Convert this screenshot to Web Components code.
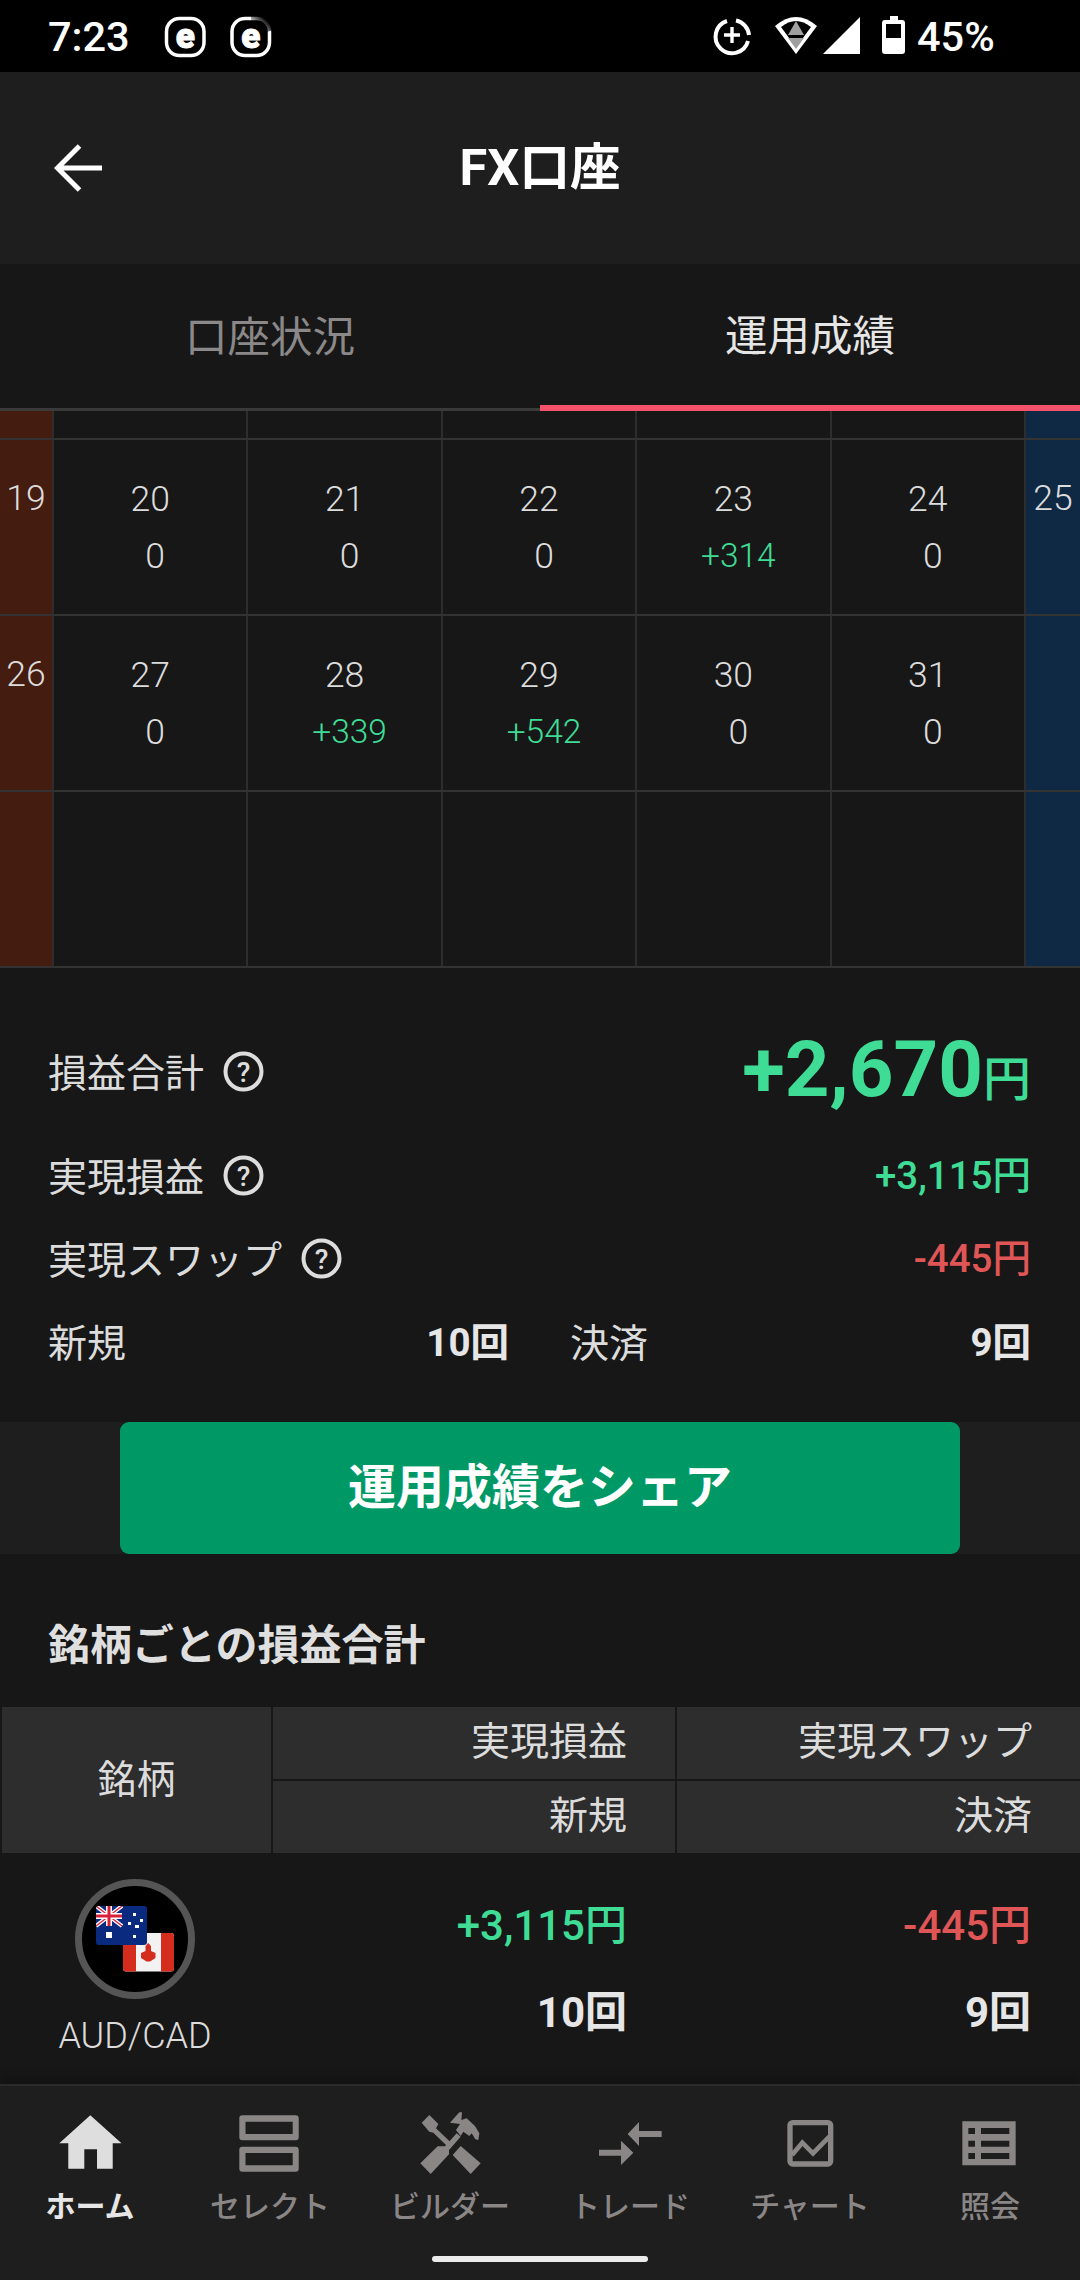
<!DOCTYPE html>
<html lang="ja"><head><meta charset="utf-8"><title>FX口座</title>
<style>
html,body{margin:0;padding:0;background:#171717;}
body{width:1080px;height:2280px;overflow:hidden;font-family:Roboto,"Noto Sans CJK JP",sans-serif;color:#e0e0e0;}
fx-app{display:block;}
</style></head>
<body>
<fx-app>
  <fx-status-bar></fx-status-bar>
  <fx-app-bar>FX口座</fx-app-bar>
  <fx-tabs></fx-tabs>
  <fx-calendar></fx-calendar>
  <fx-summary></fx-summary>
  <fx-share>運用成績をシェア</fx-share>
  <fx-symbols></fx-symbols>
  <fx-nav></fx-nav>
</fx-app>
<script>
const def=(name,html)=>customElements.define(name,class extends HTMLElement{
  constructor(){super();const r=this.attachShadow({mode:'open'});r.innerHTML=html;}
});
const zg=(x,y)=>`<g transform="translate(${x} ${y}) scale(.33333)">`;

def('fx-app','<style>:host{display:flex;flex-direction:column;height:2280px;overflow:hidden}</style><slot></slot>');

def('fx-status-bar',`<style>
:host{display:block;height:72px;background:#000;color:#fff;}
svg{display:block}
text{font-family:Roboto,sans-serif;fill:#fff}
</style>
<svg width="1080" height="72" viewBox="0 0 1080 72">
<text x="48" y="51" font-size="41.500" font-weight="500">7:23</text>
<rect x="166.500" y="18.500" width="37.500" height="37" rx="13" fill="none" stroke="#fff" stroke-width="3.500"/>
<text x="185.200" y="47.500" font-size="35" font-weight="900" text-anchor="middle" stroke="#fff" stroke-width="1">e</text>
<rect x="232" y="18.500" width="37.500" height="37" rx="13" fill="none" stroke="#fff" stroke-width="3.500"/>
<text x="250.700" y="47.500" font-size="35" font-weight="900" text-anchor="middle" stroke="#fff" stroke-width="1">e</text>
<defs><linearGradient id="fade" x1="0" y1="1" x2="1" y2="0"><stop offset=".25" stop-color="#000" stop-opacity="0"/><stop offset=".75" stop-color="#000"/></linearGradient></defs>
<path d="M251 37 L251 15 L273 15 L273 30 Z" fill="url(#fade)"/>
<path d="M727 21 A16.500 16.500 0 1 0 748 41" fill="none" stroke="#fff" stroke-width="4"/>
<path d="M736 20.500 A16.500 16.500 0 0 1 749 35" fill="none" stroke="#fff" stroke-width="4"/>
<path d="M732 27V43M724 35H740" stroke="#fff" stroke-width="3.400" fill="none"/>
<path d="M796 54 L775 26 Q796 8 817 26 Z" fill="#fff"/>
<path d="M796 47.500 L781 27 Q796 15 811 27 Z" fill="#000"/>
<path d="M796 21 L804 35 H788 Z M788 38 H804 L796 49 Z" fill="#a0a0a0"/>
<path d="M823 54 L860 17 V54 Z" fill="#fff"/>
<path d="M890 20 V16 H898 V20 H902 Q905 20 905 23 V51 Q905 54 902 54 H885 Q882 54 882 51 V23 Q882 20 885 20 Z" fill="#fff"/>
<rect x="886" y="24" width="15" height="14" fill="#000"/>
<text x="917" y="51" font-size="41.500" font-weight="500">45%</text>
</svg>`);

def('fx-app-bar',`<style>
:host{display:grid;grid-template-columns:1fr auto 1fr;align-items:center;height:192px;background:#1e1e1e;color:#fff;}
svg{display:block;margin-left:54px}
.t{font:700 50.500px Roboto,"Noto Sans CJK JP",sans-serif;padding-bottom:10px}
</style>
<svg width="50" height="50" viewBox="54 143 50 50"><path d="M102 168H58M79.500 146L57.500 168L79.500 190" fill="none" stroke="#fff" stroke-width="5"/></svg>
<div class="t"><slot></slot></div><span></span>`);

def('fx-tabs',`<style>
:host{display:flex;height:147px;background:#171717;}
div{flex:1;box-sizing:border-box;display:flex;align-items:center;justify-content:center;font:400 42.500px Roboto,"Noto Sans CJK JP",sans-serif;}
.a{color:#8a8888;border-bottom:3px solid #3a3a3a;padding-bottom:5px}
.b{color:#e6e6e6;border-bottom:6px solid #f4526b;padding-bottom:5px}
</style><div class="a">口座状況</div><div class="b">運用成績</div>`);

const rows=[
 {h:29,c:[]},
 {h:176,c:['19',['20','0'],['21','0'],['22','0'],['23','+314'],['24','0'],'25']},
 {h:176,c:['26',['27','0'],['28','+339'],['29','+542'],['30','0'],['31','0'],'']},
 {h:176,c:['',0,0,0,0,0,'']}
];
let cal='';
rows.forEach(r=>{
  cal+=`<div class="row" style="height:${r.h}px">`;
  for(let i=0;i<7;i++){
    const v=r.c[i];
    const cls=i==0?'sun':i==6?'sat':'day';
    let inner='';
    if(typeof v==='string'&&v) inner=`<span class="d">${v}</span>`;
    else if(Array.isArray(v)) inner=`<span class="d">${v[0]}</span><span class="v ${v[1][0]=='+'?'g':''}">${v[1]}</span>`;
    cal+=`<div class="${cls}">${inner}</div>`;
  }
  cal+='</div>';
});
def('fx-calendar',`<style>
:host{display:block;background:#171717;font:300 35.500px Roboto,"Noto Sans CJK JP",sans-serif;color:#dcdcdc;}
.row{display:grid;grid-template-columns:52px repeat(5,194.400px) 1fr;box-sizing:border-box;border-bottom:2px solid #333;}
.row>div{display:flex;flex-direction:column;align-items:center;box-sizing:border-box;}
.sun{background:#451c10}
.sat{background:#0f2944;border-left:2px solid #2d2d2d}
.day{border-left:2px solid #2d2d2d}
.d{line-height:40px;margin-top:39px}
.sun .d,.sat .d{margin-top:38px}
.v{line-height:40px;margin-top:17px;margin-left:10px}
.v.g{font-size:33.500px}
.g{color:#3fdc96}
</style>${cal}`);

def('fx-help',`<style>
:host{display:inline-block;width:41px;height:41px;margin-left:19px;margin-top:4px}
svg{display:block}
text{font:500 28px Roboto,sans-serif;fill:#ddd}
</style><svg width="41" height="41" viewBox="0 0 41 41"><circle cx="20.500" cy="20.500" r="18" fill="none" stroke="#ddd" stroke-width="4"/><text x="20.500" y="30.500" text-anchor="middle">?</text></svg>`);

def('fx-summary',`<style>
:host{display:block;box-sizing:border-box;height:454px;padding:50px 49px 0 48px;background:#171717;font:400 39px Roboto,"Noto Sans CJK JP",sans-serif;color:#dcdcdc;}
.r{display:flex;align-items:center;justify-content:space-between;height:83px;box-sizing:border-box;padding-bottom:6px}
.big{height:106px;margin-bottom:11px;padding-bottom:3px}
.l{display:flex;align-items:center}
.m{font-weight:500;font-size:38.500px;margin-bottom:3px}
.g{color:#3fdc96}.n{color:#e05555}
.amt{font-size:78px;font-weight:700;line-height:106px;margin-top:10px}
.amt small{font-size:48px;font-weight:500}
.two{display:grid;grid-template-columns:461px 461px;column-gap:61px;height:83px}
.e{color:#e6e6e6;font-weight:700;font-size:38.500px;margin-bottom:2px}
</style>
<div class="r big"><span class="l">損益合計<fx-help></fx-help></span><span class="amt g">+2,670<small>円</small></span></div>
<div class="r"><span class="l">実現損益<fx-help></fx-help></span><span class="m g">+3,115円</span></div>
<div class="r"><span class="l">実現スワップ<fx-help></fx-help></span><span class="m n">-445円</span></div>
<div class="two"><div class="r"><span>新規</span><span class="e">10回</span></div><div class="r"><span>決済</span><span class="e">9回</span></div></div>`);

def('fx-share',`<style>
:host{display:flex;justify-content:center;height:132px;background:#1e1e1e;}
div{width:840px;height:132px;box-sizing:border-box;padding-bottom:10px;background:#009966;border-radius:9px;display:flex;align-items:center;justify-content:center;color:#fff;font:700 48px Roboto,"Noto Sans CJK JP",sans-serif;}
</style><div><slot></slot></div>`);

def('fx-flag-pair',`<style>
:host{display:flex;justify-content:center}
.c{width:120px;height:120px;box-sizing:border-box;border:7px solid #555;border-radius:50%;background:#000;position:relative}
svg{position:absolute;left:-7px;top:-7px;display:block}
</style><div class="c"><svg width="120" height="120" viewBox="75 1879 120 120">
<clipPath id="ca"><rect x="123" y="1933" width="51" height="38.500" rx="3"/></clipPath>
<clipPath id="au"><rect x="96" y="1906" width="51" height="39" rx="3"/></clipPath>
<g clip-path="url(#ca)"><rect x="123" y="1933" width="51" height="39" fill="#f2f2f2"/><rect x="123" y="1933" width="13" height="39" fill="#d42d1e"/><rect x="161" y="1933" width="13" height="39" fill="#d42d1e"/>
<path d="M148.300 1943L151 1946V1951L155.500 1953V1958L150 1961.500H146.500L141 1958V1953L145.500 1951V1946Z" fill="#d42d1e"/></g>
<g clip-path="url(#au)"><rect x="96" y="1906" width="51" height="39" fill="#0a2a80"/>
<path d="M96 1906L122 1926M122 1906L96 1926" stroke="#fff" stroke-width="4"/><path d="M96 1906L122 1926M122 1906L96 1926" stroke="#d8203a" stroke-width="1.300"/>
<path d="M109 1906V1926M96 1916H122" stroke="#fff" stroke-width="6"/><path d="M109 1906V1926M96 1916H122" stroke="#d8203a" stroke-width="3"/>
<path d="M106 1932h6v6h-6zM133 1913h3v3h-3zM140 1919h3v3h-3zM128 1922h3v3h-3zM135 1925h4v3h-4zM133 1935h3v3h-3z" fill="#fff"/></g>
</svg></div>`);

def('fx-symbols',`<style>
:host{display:block;flex:1;min-height:0;background:#171717;font:400 39px Roboto,"Noto Sans CJK JP",sans-serif;color:#dcdcdc;}
h2{margin:0;box-sizing:border-box;height:153px;padding:70px 0 0 48px;font:700 42px/44px Roboto,"Noto Sans CJK JP",sans-serif;color:#dfdfdf;}
.hd{display:grid;grid-template-columns:269px 402px 1fr;grid-template-rows:72px 72px;gap:2px;padding-left:2px;height:146px;box-sizing:border-box}
.hd div{background:#2d2d2d;display:flex;align-items:center;justify-content:flex-end;box-sizing:border-box;padding:0 48px 10px 0;}
.hd .s{grid-row:1/3;justify-content:center;padding:0 0 8px 0}
.row{display:grid;grid-template-columns:271px 356px 404px;height:231px}
.sym{display:flex;flex-direction:column;align-items:center;padding-top:26px;padding-right:1px}
.sym span{font:300 36px/40px Roboto,sans-serif;margin-top:17px}
.num{display:flex;flex-direction:column;align-items:flex-end;padding-top:45px;font-size:42px}
.num b{font-weight:500;height:55px;line-height:55px}
.num i{font-style:normal;font-weight:700;margin-top:32px;height:55px;line-height:55px;color:#e6e6e6}
.g{color:#3fdc96}.n{color:#e05555}
</style>
<h2>銘柄ごとの損益合計</h2>
<div class="hd"><div class="s">銘柄</div><div>実現損益</div><div>実現スワップ</div><div>新規</div><div>決済</div></div>
<div class="row"><div class="sym"><fx-flag-pair></fx-flag-pair><span>AUD/CAD</span></div>
<div class="num"><b class="g">+3,115円</b><i>10回</i></div>
<div class="num"><b class="n">-445円</b><i>9回</i></div></div>`);

const icons=[
 `<path fill="#dedede" fill-rule="evenodd" d="M90.300 2115.300L121.500 2143.300H112.700V2168.700H97V2149.300H84.300V2168.700H68.300V2143.300H59.300Z"/>`,
 `<path fill="#8a8686" fill-rule="evenodd" d="M242.300 2115.300H295.700Q298.700 2115.300 298.700 2118.300V2137.300Q298.700 2140.300 295.700 2140.300H242.300Q239.300 2140.300 239.300 2137.300V2118.300Q239.300 2115.300 242.300 2115.300ZM245.500 2121.700V2134H292.700V2121.700ZM242.300 2146.700H295.700Q298.700 2146.700 298.700 2149.700V2168.700Q298.700 2171.700 295.700 2171.700H242.300Q239.300 2171.700 239.300 2168.700V2149.700Q239.300 2146.700 242.300 2146.700ZM245.500 2153V2165.300H292.700V2153Z"/>`,
 zg(400,2100)+`<g fill="#8a8686"><path d="M61 190L113 139H135L170 100L182 110L147 150V163L92 222Z"/><path d="M150 68L178 37H186L184 60L200 55L225 78L238 100L235 120L226 118L215 100L208 108L190 95L182 108L168 90L180 72Z"/><path d="M65 68L88 45L115 72L108 85L155 130L145 142L100 98L88 95Z"/><path d="M158 165L182 138L242 190L212 222Z"/></g></g>`,
 zg(400,2100)+`<path fill="#8a8686" d="M683 102L717 66V93H785V111H717V138ZM597 149H663V122L700 158L663 195V167H597Z"/></g>`,
 zg(770,2100)+`<rect x="60" y="68" width="122" height="124" rx="8" fill="none" stroke="#8a8686" stroke-width="16"/><path d="M66 165L97 128L129 160L178 110" fill="none" stroke="#8a8686" stroke-width="14"/></g>`,
 zg(770,2100)+`<path fill="#8a8686" fill-rule="evenodd" d="M577 64H737V196H577ZM595 84V102H615V84ZM633 84V102H718V84ZM595 122V140H615V122ZM633 122V140H718V122ZM595 159V177H615V159ZM633 159V177H718V159Z"/></g>`
];
const labels=['ホーム','セレクト','ビルダー','トレード','チャート','照会'];
def('fx-nav',`<style>
:host{display:block;box-sizing:border-box;height:196px;background:#1e1e1e;border-top:2px solid #2a2a2a;padding-top:19px;box-shadow:0 -6px 10px rgba(0,0,0,.25);position:relative}
.i{display:grid;grid-template-columns:repeat(6,180px)}
.t{display:flex;flex-direction:column;align-items:center;color:#8a8686;font:500 30px/44px Roboto,"Noto Sans CJK JP",sans-serif;}
.t.on{color:#e6e6e6;font-weight:700}
svg{display:block}
.h{width:216px;height:6px;border-radius:3px;background:#ececec;margin:27px auto 0}
</style><div class="i">${labels.map((l,i)=>`<div class="t${i==0?' on':''}"><svg width="180" height="80" viewBox="${i*180} 2105 180 80">${icons[i]}</svg><span>${l}</span></div>`).join('')}</div><div class="h"></div>`);
</script>
</body></html>
